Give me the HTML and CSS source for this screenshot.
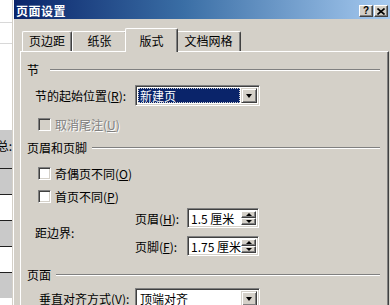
FILE: index.html
```html
<!DOCTYPE html>
<html lang="zh-CN">
<head>
<meta charset="utf-8">
<title>页面设置</title>
<link rel="stylesheet" href="styles.css">
</head>
<body>
<div class="screen">
  <div class="sheet">
    <div class="srow w h22 lined"></div>
    <div class="srow w h20 lined"></div>
    <div class="srow w h85"></div>
    <div class="srow g h38"><span class="stext">总:</span></div>
    <div class="srow g h25 dark"></div>
    <div class="srow w h25 dark"></div>
    <div class="srow g h25 dark"></div>
    <div class="srow w h25 dark"></div>
    <div class="srow g h25 dark"></div>
  </div>
  <div class="dialog">
    <div class="titlebar">
      <span class="title">页面设置</span>
      <div class="tb-btns">
        <span class="tb-btn q">?</span>
        <span class="tb-btn x"><svg width="8" height="7" viewBox="0 0 8 7"><path d="M0.5 0.5 L7.5 6.5 M7.5 0.5 L0.5 6.5" stroke="#000" stroke-width="1.6" fill="none"/></svg></span>
      </div>
    </div>
    <div class="tabs">
      <div class="tab t1">页边距</div>
      <div class="tab t2">纸张</div>
      <div class="tab t3 active">版式</div>
      <div class="tab t4">文档网格</div>
    </div>
    <div class="panel">
      <div class="group g1"><span class="gt gt-wide">节</span><i class="rule"></i></div>
      <div class="field f1">
        <span class="label">节的起始位置(<u>R</u>):</span>
        <div class="select">
          <div class="sel-value hl"><span>新建页</span></div>
          <div class="dd-btn"><i class="tri-down"></i></div>
        </div>
      </div>
      <div class="check c0 disabled"><i class="box"></i><span>取消尾注(<u>U</u>)</span></div>

      <div class="group g2"><span class="gt">页眉和页脚</span><i class="rule"></i></div>
      <div class="check c1"><i class="box"></i><span>奇偶页不同(<u>O</u>)</span></div>
      <div class="check c2"><i class="box"></i><span>首页不同(<u>P</u>)</span></div>

      <div class="margins">
        <span class="label">距边界:</span>
        <div class="spins">
          <div class="spin-row">
            <span class="slabel">页眉(<u>H</u>):</span>
            <div class="spin">
              <span class="spin-val">1.5 厘米</span>
              <div class="spin-btns"><span class="sb"><i class="tri-up"></i></span><span class="sb"><i class="tri-down small"></i></span></div>
            </div>
          </div>
          <div class="spin-row">
            <span class="slabel">页脚(<u>F</u>):</span>
            <div class="spin">
              <span class="spin-val">1.75 厘米</span>
              <div class="spin-btns"><span class="sb"><i class="tri-up"></i></span><span class="sb"><i class="tri-down small"></i></span></div>
            </div>
          </div>
        </div>
      </div>

      <div class="group g3"><span class="gt">页面</span><i class="rule"></i></div>
      <div class="field f3">
        <span class="label l3">垂直对齐方式(<u>V</u>):</span>
        <div class="select">
          <div class="sel-value"><span>顶端对齐</span></div>
          <div class="dd-btn"><i class="tri-down"></i></div>
        </div>
      </div>
    </div>
  </div>
</div>
</body>
</html>
```
FILE: styles.css
```css
* { box-sizing: border-box; }
html, body { margin: 0; padding: 0; }
body {
  width: 390px;
  height: 305px;
  overflow: hidden;
  background: #fff;
  font-family: "Noto Sans CJK SC", "Liberation Sans", sans-serif;
  font-size: 12px;
  color: #000;
}
u { text-decoration: underline; text-underline-offset: 1px; }
.screen { display: flex; width: 390px; height: 305px; overflow: hidden; }

/* spreadsheet strip behind the dialog */
.sheet { width: 12px; flex: none; display: flex; flex-direction: column; background: #fff; overflow: hidden; }
.srow { flex: none; display: flex; justify-content: flex-end; }
.srow.w { background: #fff; }
.srow.g { background: #c9c9c9; }
.srow.lined { border-bottom: 1px solid #d8d8d8; }
.srow.dark { border-top: 1px solid #202020; }
.h20 { height: 21px; }
.h22 { height: 23px; }
.h85 { height: 86px; }
.h38 { height: 38px; }
.h25 { height: 26px; }
.stext { white-space: nowrap; line-height: 14px; margin-top: 9px; font-size: 12px; color: #000; }

/* dialog window */
.dialog {
  flex: 1;
  display: flex;
  flex-direction: column;
  background: #d4d0c8;
  border-left: 1px solid #d4d0c8;
  padding-left: 1px;
  box-shadow: inset 1px 0 0 #fff;
  min-width: 0;
}
.titlebar {
  height: 19px;
  flex: none;
  display: flex;
  align-items: center;
  justify-content: space-between;
  padding: 3px 2px 0 2px;
  background: linear-gradient(to right, #0a246a 0%, #3a6ea5 45%, #a6caf0 100%);
}
.title { color: #fff; font-weight: bold; font-size: 12px; line-height: 14px; letter-spacing: 0.5px; }
.tb-btns { display: flex; gap: 1px; }
.tb-btn {
  width: 14px;
  height: 12px;
  display: flex;
  align-items: center;
  justify-content: center;
  background: #d4d0c8;
  border: 1px solid;
  border-color: #fff #404040 #404040 #fff;
  box-shadow: inset -1px -1px 0 #808080;
  font-family: "Liberation Sans", sans-serif;
  font-weight: bold;
  font-size: 10px;
  line-height: 10px;
}

/* tabs */
.tabs {
  height: 23px;
  flex: none;
  margin-top: 9px;
  padding-left: 8px;
  display: flex;
  align-items: flex-end;
}
.tab {
  height: 20px;
  border-top: 1px solid #fff;
  border-left: 1px solid #fff;
  border-right: 1px solid #404040;
  box-shadow: inset -1px 0 0 #808080;
  border-radius: 2px 2px 0 0;
  text-align: center;
  line-height: 17px;
  background: #d4d0c8;
  white-space: nowrap;
}
.t1 { width: 50px; }
.t2 { width: 55px; }
.t3 { width: 53px; }
.t4 { width: 65px; }
.tab.active {
  height: 24px;
  margin: 0 -2px -1px -2px;
  padding-top: 2px;
  line-height: 20px;
  position: relative;
  z-index: 2;
}

/* panel */
.panel {
  flex: 1;
  margin: 0 1px 0 6px;
  border-top: 1px solid #fff;
  border-left: 1px solid #fff;
  border-right: 1px solid #404040;
  box-shadow: inset -1px 0 0 #808080;
  padding: 0 8px 0 6px;
  display: flex;
  flex-direction: column;
}
.group { display: flex; align-items: center; height: 16px; flex: none; }
.gt { line-height: 16px; white-space: nowrap; }
.gt-wide { padding-right: 6px; }
.rule { flex: 1; height: 2px; border-top: 1px solid #808080; border-bottom: 1px solid #fff; margin-left: 5px; }
.g1 { margin-top: 10px; }
.g2 { margin-top: 8px; }
.g3 { margin-top: 11px; }

.field { display: flex; align-items: center; height: 21px; flex: none; margin-left: 8px; }
.f1 { margin-top: 7px; }
.f3 { margin-top: 5px; }
.label { width: 100px; flex: none; white-space: nowrap; }
.l3 { width: 96px; margin-left: 4px; }

.select {
  width: 125px;
  height: 21px;
  display: flex;
  align-items: stretch;
  padding: 2px;
  background: #fff;
  border: 1px solid;
  border-color: #808080 #fff #fff #808080;
  box-shadow: inset 1px 1px 0 #404040, inset -1px -1px 0 #d4d0c8;
}
.sel-value { flex: 1; display: flex; align-items: center; padding-left: 2px; white-space: nowrap; overflow: hidden; }
.sel-value.hl {
  margin-right: 1px;
  background: #0a246a;
  color: #fff;
  outline: 1px dotted #d0d0d0;
  outline-offset: -1px;
}
.dd-btn {
  width: 16px;
  flex: none;
  display: flex;
  align-items: center;
  justify-content: center;
  background: #d4d0c8;
  border: 1px solid;
  border-color: #d4d0c8 #404040 #404040 #d4d0c8;
  box-shadow: inset 1px 1px 0 #fff, inset -1px -1px 0 #808080;
}
.tri-down { width: 0; height: 0; border-left: 3.5px solid transparent; border-right: 3.5px solid transparent; border-top: 4px solid #000; }
.tri-down.small { border-left-width: 3px; border-right-width: 3px; border-top-width: 3px; }
.tri-up { width: 0; height: 0; border-left: 3px solid transparent; border-right: 3px solid transparent; border-bottom: 3px solid #000; }

.check { display: flex; align-items: center; gap: 4px; height: 16px; flex: none; margin-left: 11px; white-space: nowrap; }
.c0 { margin-top: 10px; }
.c1 { margin-top: 9px; }
.c2 { margin-top: 7px; }
.box {
  width: 13px;
  height: 13px;
  flex: none;
  background: #fff;
  border: 1px solid;
  border-color: #808080 #fff #fff #808080;
  box-shadow: inset 1px 1px 0 #404040, inset -1px -1px 0 #d4d0c8;
}
.check.disabled { color: #808080; text-shadow: 1px 1px 0 #fff; }
.check.disabled .box { background: #d4d0c8; }

.margins { display: flex; align-items: center; margin-top: 4px; margin-left: 8px; flex: none; }
.spins { display: flex; flex-direction: column; gap: 8px; }
.spin-row { display: flex; align-items: center; }
.slabel { width: 52px; flex: none; white-space: nowrap; }
.spin {
  width: 72px;
  height: 20px;
  display: flex;
  align-items: stretch;
  padding: 2px;
  background: #fff;
  border: 1px solid;
  border-color: #808080 #fff #fff #808080;
  box-shadow: inset 1px 1px 0 #404040, inset -1px -1px 0 #d4d0c8;
}
.spin-val { flex: 1; display: flex; align-items: center; padding-left: 1px; white-space: nowrap; overflow: hidden; }
.spin-btns { width: 15px; flex: none; display: flex; flex-direction: column; }
.sb {
  flex: 1;
  display: flex;
  align-items: center;
  justify-content: center;
  background: #d4d0c8;
  border: 1px solid;
  border-color: #fff #404040 #404040 #fff;
  box-shadow: inset -1px -1px 0 #808080;
}
```
